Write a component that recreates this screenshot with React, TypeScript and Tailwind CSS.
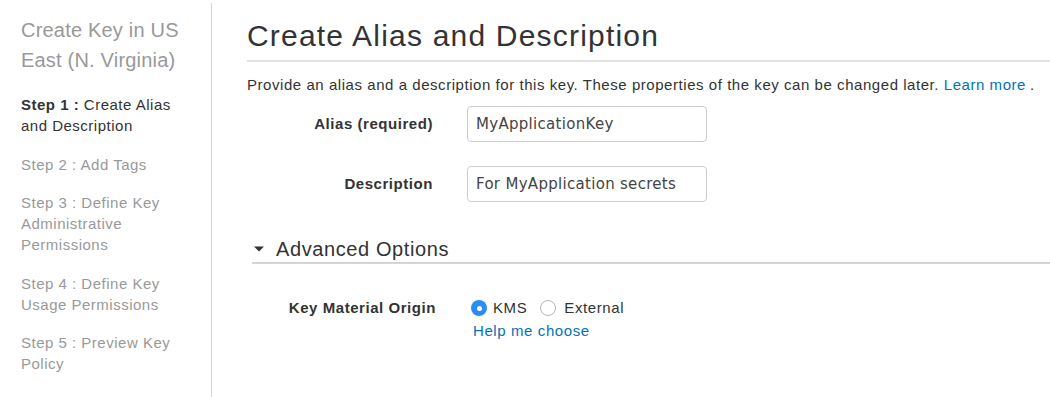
import React from "react";

export default function App() {
  const font = { fontFamily: '"Liberation Sans", Arial, sans-serif' };
  const inputFont = { fontFamily: '"DejaVu Sans", sans-serif' };
  return (
    <div className="flex w-[1050px] h-[397px] bg-white text-[#333]" style={font}>
      <aside className="w-[212px] shrink-0 border-r border-[#d5d5d5] pl-[21px] pr-[18px] pt-[12px] mt-[3px]">
        <h2 className="text-[20px] leading-[30px] tracking-[0.2px] text-[#999]">Create Key in US East (N. Virginia)</h2>
        <ul className="mt-[19px] text-[15px] leading-[21px] tracking-[0.5px] text-[#999] flex flex-col gap-[17.5px]">
          <li className="text-[#333]"><span className="font-bold">Step 1 :</span> Create Alias and Description</li>
          <li>Step 2 : Add Tags</li>
          <li>Step 3 : Define Key Administrative Permissions</li>
          <li>Step 4 : Define Key Usage Permissions</li>
          <li>Step 5 : Preview Key Policy</li>
        </ul>
      </aside>
      <main className="flex-1 pl-[35px] pt-[18px]">
        <h1 className="text-[30px] leading-[36px] tracking-[1.2px] text-[#333] pb-[6px] border-b-2 border-[#e1e1e1]">Create Alias and Description</h1>
        <p className="mt-[13px] text-[15px] leading-[20px] tracking-[0.55px]">
          Provide an alias and a description for this key. These properties of the key can be changed later.{" "}
          <a className="text-[#0073bb]">Learn more</a><span className="ml-[4px]">.</span>
        </p>
        <div className="mt-[11px] flex flex-col gap-[24px]">
          <div className="flex items-center">
            <label className="w-[186px] text-right text-[15px] tracking-[0.55px] font-bold">Alias (required)</label>
            <div className="ml-[34px] w-[240px] h-[36px] rounded-[4px] border border-[#ccc] flex items-center px-[8px] text-[15px] tracking-[0.3px] text-[#444]" style={inputFont}>MyApplicationKey</div>
          </div>
          <div className="flex items-center">
            <label className="w-[186px] text-right text-[15px] tracking-[0.55px] font-bold">Description</label>
            <div className="ml-[34px] w-[240px] h-[36px] rounded-[4px] border border-[#ccc] flex items-center px-[8px] text-[15px] tracking-[0.3px] text-[#444]" style={inputFont}>For MyApplication secrets</div>
          </div>
        </div>
        <div className="mt-[34px] ml-[5px] flex items-center gap-[11px] pb-0 border-b-2 border-[#d5d5d5]">
          <svg width="12" height="6" viewBox="0 0 12 6" className="ml-[1px]"><path d="M1 0.5 L11 0.5 L6 5.5 Z" fill="#333" /></svg>
          <span className="text-[20px] leading-[26px] tracking-[0.6px]">Advanced Options</span>
        </div>
        <div className="mt-[34px] flex">
          <label className="w-[189px] text-right text-[15px] tracking-[0.55px] font-bold leading-[20px]">Key Material Origin</label>
          <div className="ml-[35px] flex flex-col">
            <div className="flex items-center text-[15px] leading-[20px] tracking-[0.6px]">
              <span className="w-[16px] h-[16px] rounded-full bg-[#2a8cf7] flex items-center justify-center">
                <span className="w-[5px] h-[5px] rounded-full bg-white" />
              </span>
              <span className="ml-[6px]">KMS</span>
              <span className="ml-[13px] w-[16px] h-[16px] rounded-full border border-[#b5b5b5] bg-white" />
              <span className="ml-[8px]">External</span>
            </div>
            <a className="mt-[3px] ml-[2px] text-[15px] leading-[20px] tracking-[0.6px] text-[#0073bb]">Help me choose</a>
          </div>
        </div>
      </main>
    </div>
  );
}
